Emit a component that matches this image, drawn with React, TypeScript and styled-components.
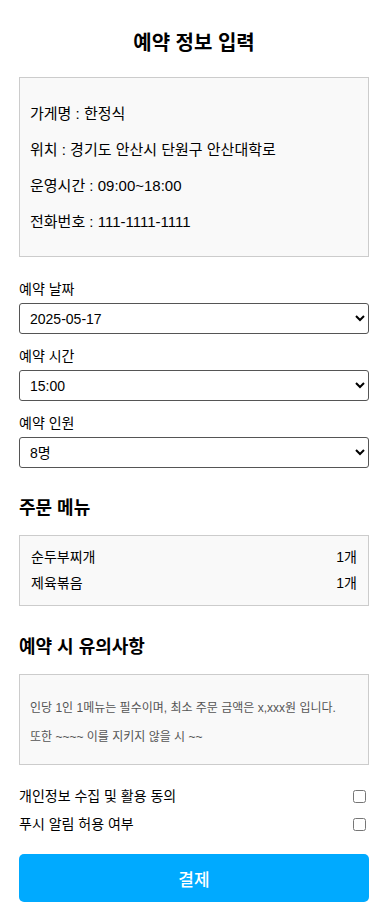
import { createGlobalStyle, styled } from "styled-components";

const GlobalStyle = createGlobalStyle`
  body {
    margin: 0;
    background: #ffffff;
    font-family: "Liberation Sans", "Noto Sans CJK KR", sans-serif;
    color: #000000;
  }
`;

const Page = styled.div`
  width: 350px;
  padding: 31px 15px 16px 19px;
  display: flex;
  flex-direction: column;
`;

const Title = styled.h2`
  margin: 0 0 22px;
  font-size: 20px;
  line-height: 24px;
  font-weight: 700;
  text-align: center;
`;

const SectionTitle = styled.h3<{ $top: number }>`
  margin: ${(p) => p.$top}px 0 16px;
  font-size: 18px;
  line-height: 22px;
  font-weight: 700;
`;

const Box = styled.div`
  background: #f9f9f9;
  border: 1px solid #cccccc;
`;

const InfoBox = styled(Box)`
  padding: 10px 10px 8px;
`;

const InfoLine = styled.p`
  margin: 16px 0;
  font-size: 15px;
  line-height: 20px;
`;

const Fields = styled.div`
  display: flex;
  flex-direction: column;
  gap: 13px;
  margin-top: 23px;
`;

const Field = styled.label`
  display: flex;
  flex-direction: column;
  gap: 5px;
`;

const FieldLabel = styled.span`
  font-size: 14px;
  line-height: 18px;
`;

const Select = styled.select`
  height: 31px;
  width: 100%;
  padding: 0 6px;
  border: 1px solid #555555;
  border-radius: 3px;
  background: #ffffff;
  font-family: inherit;
  font-size: 14px;
  color: #000000;
`;

const MenuBox = styled(Box)`
  padding: 11px 11px 12px;
  display: flex;
  flex-direction: column;
  gap: 6px;
`;

const MenuRow = styled.div`
  display: flex;
  justify-content: space-between;
  font-size: 14px;
  line-height: 20px;
`;

const NoteBox = styled(Box)`
  padding: 24px 10px 18px;
  display: flex;
  flex-direction: column;
  gap: 11px;
`;

const NoteLine = styled.p`
  margin: 0;
  font-size: 12px;
  line-height: 18px;
  color: #555555;
`;

const Agreements = styled.div`
  margin-top: 21px;
  display: flex;
  flex-direction: column;
  gap: 8px;
`;

const AgreeRow = styled.label`
  display: flex;
  justify-content: space-between;
  align-items: center;
  font-size: 14px;
  line-height: 20px;
`;

const Check = styled.input`
  width: 13px;
  height: 13px;
  margin: 0 3px 0 0;
`;

const PayButton = styled.button`
  margin-top: 20px;
  height: 48px;
  width: 100%;
  border: none;
  border-radius: 5px;
  background: #00aaff;
  color: #ffffff;
  font-family: inherit;
  font-size: 17px;
  font-weight: 500;
`;

const menu = [
  { name: "순두부찌개", count: 1 },
  { name: "제육볶음", count: 1 },
];

function App() {
  return (
    <Page>
      <GlobalStyle />
      <Title>예약 정보 입력</Title>
      <InfoBox>
        <InfoLine>가게명 : 한정식</InfoLine>
        <InfoLine>위치 : 경기도 안산시 단원구 안산대학로</InfoLine>
        <InfoLine>운영시간 : 09:00~18:00</InfoLine>
        <InfoLine>전화번호 : 111-1111-1111</InfoLine>
      </InfoBox>

      <Fields>
        <Field>
          <FieldLabel>예약 날짜</FieldLabel>
          <Select defaultValue="2025-05-17">
            <option>2025-05-17</option>
            <option>2025-05-18</option>
          </Select>
        </Field>
        <Field>
          <FieldLabel>예약 시간</FieldLabel>
          <Select defaultValue="15:00">
            <option>15:00</option>
            <option>16:00</option>
          </Select>
        </Field>
        <Field>
          <FieldLabel>예약 인원</FieldLabel>
          <Select defaultValue="8명">
            <option>8명</option>
            <option>9명</option>
          </Select>
        </Field>
      </Fields>

      <SectionTitle $top={29}>주문 메뉴</SectionTitle>
      <MenuBox>
        {menu.map((m) => (
          <MenuRow key={m.name}>
            <span>{m.name}</span>
            <span>{m.count}개</span>
          </MenuRow>
        ))}
      </MenuBox>

      <SectionTitle $top={30}>예약 시 유의사항</SectionTitle>
      <NoteBox>
        <NoteLine>인당 1인 1메뉴는 필수이며, 최소 주문 금액은 x,xxx원 입니다.</NoteLine>
        <NoteLine>또한 ~~~~ 이를 지키지 않을 시 ~~</NoteLine>
      </NoteBox>

      <Agreements>
        <AgreeRow>
          개인정보 수집 및 활용 동의
          <Check type="checkbox" />
        </AgreeRow>
        <AgreeRow>
          푸시 알림 허용 여부
          <Check type="checkbox" />
        </AgreeRow>
      </Agreements>

      <PayButton>결제</PayButton>
    </Page>
  );
}

export default App;
